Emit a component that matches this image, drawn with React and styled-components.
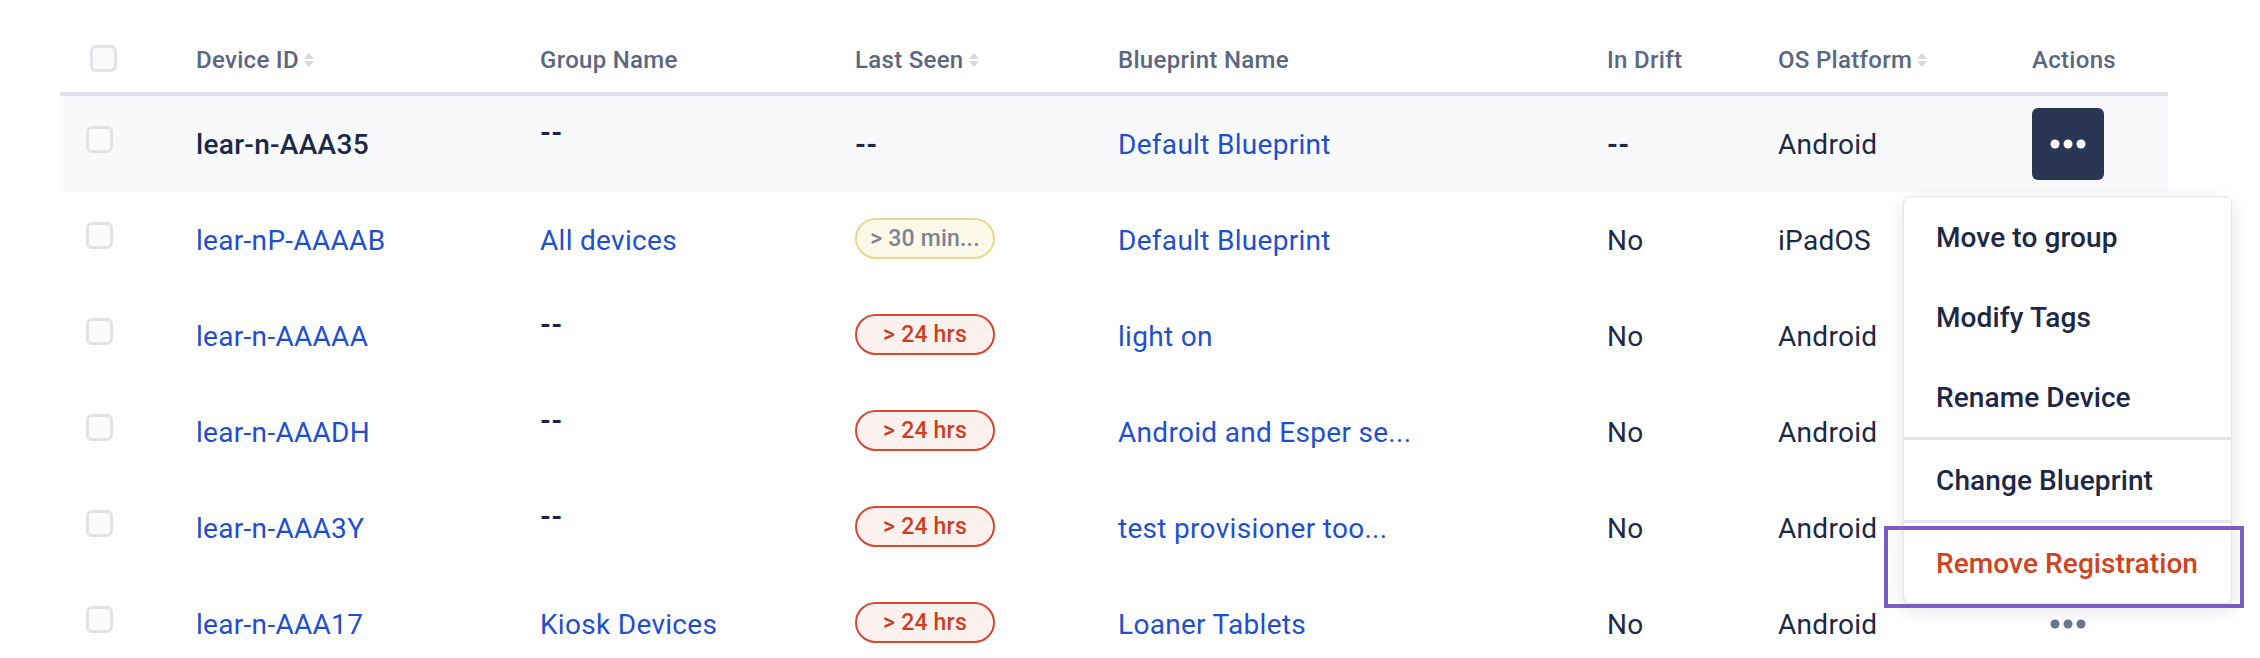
import React from "react";
import styled, { createGlobalStyle } from "styled-components";

const GlobalStyle = createGlobalStyle`
  html, body {
    margin: 0;
    padding: 0;
    background: #ffffff;
    overflow: hidden;
  }
  body {
    font-family: Roboto, "Liberation Sans", Arial, sans-serif;
    color: #1c2847;
    -webkit-font-smoothing: antialiased;
  }
`;

const COLS = "136px 344px 315px 263px 489px 171px 254px 136px";

const Table = styled.div`
  margin-left: 60px;
  width: 2108px;
`;

const HeaderRow = styled.div`
  display: grid;
  grid-template-columns: ${COLS};
  height: 96px;
  box-sizing: border-box;
  padding-top: 28px;
  align-items: center;
  border-bottom: 4px solid #dfe1e6;
`;

const HeaderCell = styled.div`
  display: flex;
  align-items: center;
  gap: 4px;
  font-size: 24px;
  font-weight: 500;
  letter-spacing: 0.3px;
  color: #5b6782;
  white-space: nowrap;
`;

const BodyRow = styled.div`
  display: grid;
  grid-template-columns: ${COLS};
  height: 96px;
  background: ${(p) => (p.$highlight ? "#f8f9fb" : "transparent")};
`;

const Cell = styled.div`
  position: relative;
  display: flex;
  align-items: center;
  min-width: 0;
  box-sizing: border-box;
  padding-bottom: ${(p) => (p.$lift ? "24px" : "0")};
  font-size: 28px;
  letter-spacing: 0.3px;
  white-space: nowrap;
  color: #1c2847;
`;

const Checkbox = styled.span`
  display: block;
  width: 27px;
  height: 27px;
  box-sizing: border-box;
  border: 3px solid #e1e3e7;
  border-radius: 6px;
  background: #f9fafb;
  margin-left: ${(p) => (p.$header ? "30px" : "26px")};
  margin-bottom: ${(p) => (p.$header ? "4px" : "10px")};
`;

const Link = styled.span`
  color: #1f4fd1;
`;

const Strong = styled.span`
  font-weight: 500;
  color: #1c2847;
`;

const Dash = styled.span`
  font-weight: 700;
  color: #1c2847;
`;

const Badge = styled.span`
  display: block;
  width: 140px;
  height: 41px;
  box-sizing: border-box;
  border-radius: 21px;
  border: 2px solid ${(p) => (p.$tone === "warn" ? "#ebd78e" : "#d64a2e")};
  background: ${(p) => (p.$tone === "warn" ? "#fdf9e8" : "#fdf1f0")};
  color: ${(p) => (p.$tone === "warn" ? "#7c8398" : "#cf3f1c")};
  font-size: 23px;
  font-weight: 500;
  letter-spacing: 0.2px;
  line-height: 37px;
  text-align: center;
  padding: 0 12px;
  overflow: hidden;
  margin-bottom: 4px;
`;

const ActionButton = styled.button`
  width: 72px;
  height: 72px;
  border: none;
  border-radius: 6px;
  background: #293654;
  display: flex;
  align-items: center;
  justify-content: center;
  padding: 0;
  cursor: pointer;
`;

const DotsHolder = styled.span`
  width: 72px;
  display: flex;
  justify-content: center;
`;

const Menu = styled.div`
  position: absolute;
  z-index: 10;
  left: -129px;
  top: calc(100% + 4px);
  width: 329px;
  box-sizing: border-box;
  background: #ffffff;
  border: 1px solid #e3e5e9;
  border-radius: 8px;
  box-shadow: 0 6px 18px rgba(20, 30, 60, 0.12);
  letter-spacing: normal;
`;

const MenuItem = styled.div`
  position: relative;
  height: 80px;
  display: flex;
  align-items: center;
  padding-left: 32px;
  font-size: 28px;
  font-weight: 500;
  letter-spacing: 0.1px;
  color: ${(p) => (p.$danger ? "#d1421f" : "#1c2847")};
  white-space: nowrap;
`;

const MenuDivider = styled.div`
  height: 3px;
  background: #e2e4e9;
`;

const Highlight = styled.div`
  position: absolute;
  left: -20px;
  top: 3px;
  width: 360px;
  height: 82px;
  box-sizing: border-box;
  border: 4px solid #7a5cc6;
  pointer-events: none;
`;

function SortIcon() {
  return (
    <svg width="12" height="16" viewBox="0 0 12 16" aria-hidden="true">
      <path d="M6 1 L11 7 L1 7 Z" fill="#d6d9df" />
      <path d="M1 9 L11 9 L6 15 Z" fill="#d6d9df" />
    </svg>
  );
}

function Dots({ color }) {
  return (
    <svg width="36" height="10" viewBox="0 0 36 10" aria-hidden="true">
      <circle cx="5" cy="5" r="4.5" fill={color} />
      <circle cx="18" cy="5" r="4.5" fill={color} />
      <circle cx="31" cy="5" r="4.5" fill={color} />
    </svg>
  );
}

const headers = [
  { label: "Device ID", sort: true },
  { label: "Group Name" },
  { label: "Last Seen", sort: true },
  { label: "Blueprint Name" },
  { label: "In Drift" },
  { label: "OS Platform", sort: true },
  { label: "Actions" },
];

const rows = [
  { id: "lear-n-AAA35", group: null, seen: null, blueprint: "Default Blueprint", drift: "--", os: "Android", active: true },
  { id: "lear-nP-AAAAB", group: "All devices", seen: { tone: "warn", text: "> 30 min..." }, blueprint: "Default Blueprint", drift: "No", os: "iPadOS" },
  { id: "lear-n-AAAAA", group: null, seen: { tone: "danger", text: "> 24 hrs" }, blueprint: "light on", drift: "No", os: "Android" },
  { id: "lear-n-AAADH", group: null, seen: { tone: "danger", text: "> 24 hrs" }, blueprint: "Android and Esper se...", drift: "No", os: "Android" },
  { id: "lear-n-AAA3Y", group: null, seen: { tone: "danger", text: "> 24 hrs" }, blueprint: "test provisioner too...", drift: "No", os: "Android" },
  { id: "lear-n-AAA17", group: "Kiosk Devices", seen: { tone: "danger", text: "> 24 hrs" }, blueprint: "Loaner Tablets", drift: "No", os: "Android" },
];

function ActionsMenu() {
  return (
    <Menu>
      <MenuItem>Move to group</MenuItem>
      <MenuItem>Modify Tags</MenuItem>
      <MenuItem>Rename Device</MenuItem>
      <MenuDivider />
      <MenuItem>Change Blueprint</MenuItem>
      <MenuDivider />
      <MenuItem $danger>
        Remove Registration
        <Highlight />
      </MenuItem>
    </Menu>
  );
}

export default function App() {
  return (
    <>
      <GlobalStyle />
      <Table>
        <HeaderRow>
          <HeaderCell>
            <Checkbox $header />
          </HeaderCell>
          {headers.map((h) => (
            <HeaderCell key={h.label}>
              {h.label}
              {h.sort && <SortIcon />}
            </HeaderCell>
          ))}
        </HeaderRow>
        {rows.map((r) => (
          <BodyRow key={r.id} $highlight={r.active}>
            <Cell>
              <Checkbox />
            </Cell>
            <Cell>{r.active ? <Strong>{r.id}</Strong> : <Link>{r.id}</Link>}</Cell>
            <Cell $lift={!r.group}>{r.group ? <Link>{r.group}</Link> : <Dash>--</Dash>}</Cell>
            <Cell>
              {r.seen ? <Badge $tone={r.seen.tone}>{r.seen.text}</Badge> : <Dash>--</Dash>}
            </Cell>
            <Cell>
              <Link>{r.blueprint}</Link>
            </Cell>
            <Cell>{r.drift === "--" ? <Dash>--</Dash> : r.drift}</Cell>
            <Cell>{r.os}</Cell>
            <Cell>
              {r.active ? (
                <>
                  <ActionButton aria-label="Actions">
                    <Dots color="#ffffff" />
                  </ActionButton>
                  <ActionsMenu />
                </>
              ) : (
                <DotsHolder>
                  <Dots color="#6b7591" />
                </DotsHolder>
              )}
            </Cell>
          </BodyRow>
        ))}
      </Table>
    </>
  );
}
